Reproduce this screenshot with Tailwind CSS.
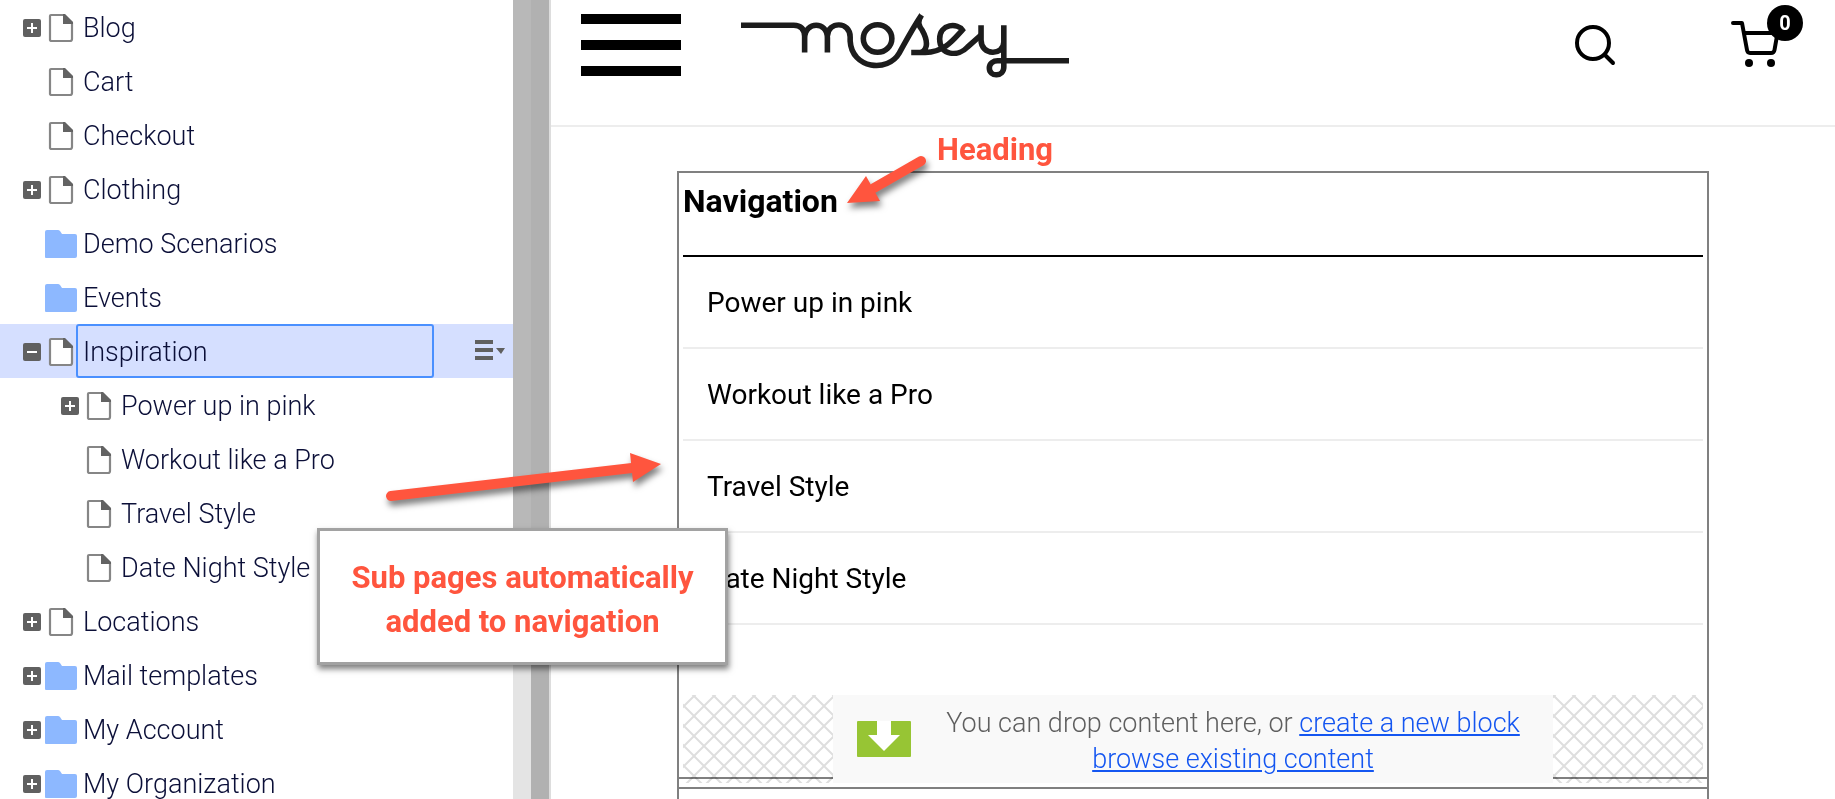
<!DOCTYPE html>
<html lang="en">
<head>
<meta charset="utf-8">
<title>Mosey – Navigation block</title>
<script src="https://cdn.jsdelivr.net/npm/@tailwindcss/browser@4"></script>
</head>
<body class="relative flex h-screen overflow-hidden bg-white font-['Roboto','Liberation_Sans',sans-serif]">
<svg class="hidden">
  <symbol id="page" viewBox="0 0 26 30"><path d="M3 2h13l8 8v16a2 2 0 0 1-2 2H3a2 2 0 0 1-1-1V3a1 1 0 0 1 1-1z" fill="#fff" stroke="#868686" stroke-width="2.200"/><path d="M15 1h2l8 8v2H15z" fill="#636363"/></symbol>
  <symbol id="folder" viewBox="0 0 32 30"><path d="M0 3a2 2 0 0 1 2-2h11q1 0 2 1l2 3h13a2 2 0 0 1 2 2v20a2 2 0 0 1-2 2H1a1 1 0 0 1-1-1z" fill="#8db8ff"/></symbol>
  <symbol id="plus" viewBox="0 0 18 18"><rect width="18" height="18" rx="2" fill="#606060"/><path d="M9 4v10M4 9h10" stroke="#fff" stroke-width="2"/></symbol>
  <symbol id="minus" viewBox="0 0 18 18"><rect width="18" height="18" rx="2" fill="#606060"/><path d="M4 9h10" stroke="#fff" stroke-width="2"/></symbol>
</svg>

<aside class="w-[513px] shrink-0 overflow-hidden bg-white text-[27px] font-light leading-[52px] text-[#0b0f38]">
  <ul id="tree"></ul>
</aside>

<div class="w-[18px] shrink-0 bg-[#e4e4e4]"><div class="h-[635px] bg-[#b8b8b8]"></div></div>
<div class="w-[18px] shrink-0 bg-[#b1b1b1]"></div>
<div class="w-[2px] shrink-0 bg-[#dddddd]"></div>

<main class="min-w-0 flex-1">
  <header class="flex h-[127px] items-start border-b-2 border-[#ededed] pl-[30px]">
    <button class="mt-[14px] flex w-[100px] flex-col gap-[16px]" aria-label="Menu"><span class="h-[10px] w-full bg-black"></span><span class="h-[10px] w-full bg-black"></span><span class="h-[10px] w-full bg-black"></span></button>
    <a href="#" class="ml-[60px] mt-[10px]" aria-label="mosey">
      <svg class="h-[70px] w-[328px]" viewBox="735 10 317 70" preserveAspectRatio="none" fill="none" stroke="#1c1c1c" stroke-width="5.4">
        <path d="M735 25.3H786Q796 25.500 796.500 36V52.600M796.500 38C797 21 818.500 21 818.500 38V52.600M818.500 36C819 21 840.500 21 840.500 37V41C842 69 877 73 888 53C895 40 901 28 909.500 15C905 22 907 26 910 30C917 43 915 52.500 906 52.500H899.500H913C932 52 940 40 949 30C945 23 927 23 927 39C927 56 945 57 954 47L967 35"/>
        <circle cx="867" cy="38.500" r="13.800"/>
        <path d="M967 25.300V40C967 56 989 56 989 42V25.300V67C989 77 975 77.500 975 68C975 63 979 60.800 983 60.800H1052"/>
      </svg>
    </a>
    <button class="ml-auto mt-[22px] size-[48px]" aria-label="Search"><svg viewBox="0 0 48 48" fill="none" stroke="#000" stroke-width="4" stroke-linecap="round"><circle cx="22" cy="21" r="16"/><path d="M34 33l8 8"/></svg></button>
    <button class="relative ml-[110px] mr-[30px] mt-[4px] h-[68px] w-[76px]" aria-label="Cart, 0 items"><svg class="size-full" viewBox="1729 4 76 68" fill="none" stroke="#000" stroke-width="4" stroke-linecap="round" stroke-linejoin="round"><path d="M1733 23h9l5 27q.500 3 3 3h21q3 0 3.500-3l3-17H1744"/><circle cx="1749" cy="63" r="4" fill="#000" stroke="none"/><circle cx="1771" cy="63" r="4" fill="#000" stroke="none"/></svg><span class="absolute left-[38px] top-[1px] grid size-[36px] place-items-center rounded-full bg-black text-[20px] font-bold text-white">0</span></button>
  </header>

  <section class="mx-[126px] mt-[44px] h-[640px] border-2 border-b-0 border-[#808080]">
    <div class="px-[4px]">
      <h2 class="h-[82px] pt-[8px] text-[32px] font-bold leading-[40px] text-black">Navigation</h2>
      <nav class="border-t-2 border-black text-[28px] leading-[88px] text-black">
        <a href="#" class="block border-b-2 border-[#ededed] pl-[24px] pt-[2px]">Power up in pink</a>
        <a href="#" class="block border-b-2 border-[#ededed] pl-[24px] pt-[2px]">Workout like a Pro</a>
        <a href="#" class="block border-b-2 border-[#ededed] pl-[24px] pt-[2px]">Travel Style</a>
        <a href="#" class="block border-b-2 border-[#ededed] pl-[24px] pt-[2px]">Date Night Style</a>
      </nav>
      <div class="relative mt-[70px] mb-[-6px] flex h-[88px]">
        <svg class="absolute inset-0 size-full mix-blend-multiply" aria-hidden="true"><defs><pattern id="hatch" x="11" y="1" width="20" height="20" patternUnits="userSpaceOnUse"><path d="M-1 -1L21 21M21 -1L-1 21" stroke="#dedede" stroke-width="2"/></pattern></defs><rect width="100%" height="100%" fill="url(#hatch)"/></svg>
        <div class="relative mx-auto flex w-[720px] bg-[#f9f9f9] pl-[24px]">
          <svg class="mt-[26px] h-[36px] w-[54px] shrink-0" viewBox="0 0 54 36"><rect width="54" height="36" rx="1" fill="#97c534"/><path d="M20 0h14v14h9L27 30 11 14h9z" fill="#fff"/></svg>
          <p class="ml-[22px] w-[600px] shrink-0 pt-[10px] text-center text-[27px] font-light leading-[36px] text-[#5f5f5f]">You can drop content here, or <a href="#" class="text-[#1456f1] underline">create a new block</a><br><a href="#" class="text-[#1456f1] underline">browse existing content</a></p>
        </div>
      </div>
    </div>
    <div class="h-[2px] bg-[#808080]"></div>
    <div class="mt-[8px] h-[2px] bg-[#808080]"></div>
  </section>
</main>

<!-- Callouts lie over the whole editor -->
<div class="absolute left-[317px] top-[528px] z-20 w-[411px] border-[3px] border-[#a2a2a2] bg-white pb-[18px] pt-[25px] text-center text-[31px] font-bold leading-[44px] text-[#ff553e] shadow-[1px_4px_6px_rgba(0,0,0,0.5)]">Sub pages automatically<br>added to navigation</div>
<div class="absolute left-[937px] top-[130px] z-20 text-[31px] font-bold leading-[40px] text-[#ff553e]">Heading</div>
<svg class="pointer-events-none absolute left-0 top-0 z-10 h-[560px] w-[960px] drop-shadow-[2px_5px_3px_rgba(0,0,0,0.5)]" viewBox="0 0 960 560" fill="#ff553e" stroke="#ff553e" aria-hidden="true">
  <path d="M391 496L632 468M921 161L874 188" fill="none" stroke-width="10" stroke-linecap="round"/>
  <path d="M630 453l31 11-28 18zM866 176l-19 27 33-2z" stroke="none"/>
</svg>

<script>
  const rows = [
    ['Blog', 'page', 0, 'plus'], ['Cart', 'page', 0, ''], ['Checkout', 'page', 0, ''], ['Clothing', 'page', 0, 'plus'],
    ['Demo Scenarios', 'folder', 0, ''], ['Events', 'folder', 0, ''], ['Inspiration', 'page', 0, 'minus'],
    ['Power up in pink', 'page', 1, 'plus'], ['Workout like a Pro', 'page', 1, ''], ['Travel Style', 'page', 1, ''],
    ['Date Night Style', 'page', 1, ''], ['Locations', 'page', 0, 'plus'], ['Mail templates', 'folder', 0, 'plus'],
    ['My Account', 'folder', 0, 'plus'], ['My Organization', 'folder', 0, 'plus']
  ];
  const tree = document.getElementById('tree');
  for (const [name, icon, level, toggle] of rows) {
    const selected = toggle === 'minus';
    const indent = level ? 'pl-[61px]' : 'pl-[23px]';
    const button = toggle ? `<button class="size-[18px] shrink-0" aria-label="Toggle ${name}"><svg class="size-full"><use href="#${toggle}"/></svg></button>` : '<span class="w-[18px] shrink-0"></span>';
    const glyph = icon === 'page' ? '<svg class="ml-[7px] h-[30px] w-[26px] shrink-0"><use href="#page"/></svg>' : '<svg class="ml-[4px] h-[30px] w-[32px] shrink-0"><use href="#folder"/></svg>';
    const label = selected
      ? '<input class="ml-[2px] mt-[-2px] h-[54px] w-[358px] self-start rounded-[3px] border-2 border-[#4a90ff] bg-transparent pl-[5px] pt-[2px] outline-none" aria-label="Page name" value="Inspiration"><button class="ml-[40px] mb-[4px] h-[22px] w-[32px]" aria-label="Page menu"><svg class="size-full" viewBox="0 0 32 22" fill="#606060"><path d="M1 1h18v4H1zM1 9h18v4H1zM1 17h18v4H1zM22 9h9l-4 6z"/></svg></button>'
      : `<span class="${icon === 'page' ? 'ml-[9px]' : 'ml-[6px]'} whitespace-nowrap">${name}</span>`;
    tree.insertAdjacentHTML('beforeend', `<li class="flex h-[54px] items-center pt-[2px] ${indent} ${selected ? 'bg-[#d5dfff]' : ''}">${button}${glyph}${label}</li>`);
  }
</script>
</body>
</html>
